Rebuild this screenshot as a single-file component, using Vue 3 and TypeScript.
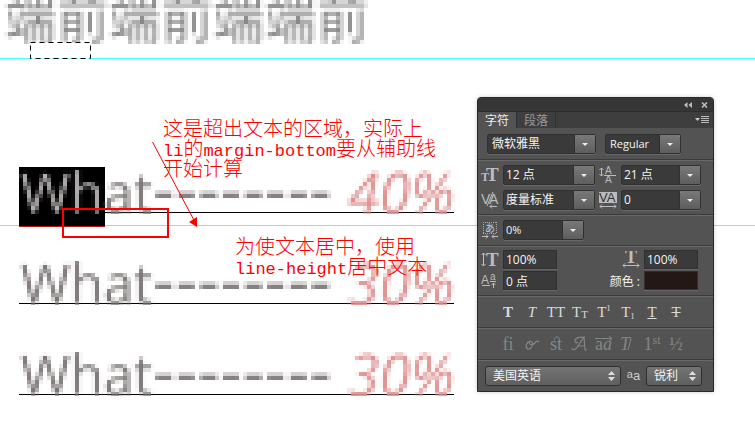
<script setup lang="ts">
import { ref } from 'vue'

interface Item { value: string; selected: boolean }

const items: Item[] = [
  { value: '40%', selected: true },
  { value: '30%', selected: false },
  { value: '30%', selected: false },
]

const family = ref('微软雅黑')
const weight = ref('Regular')
const size = ref('12 点')
const leading = ref('21 点')
const kerning = ref('度量标准')
const tracking = ref('0')
const tsume = ref('0%')
const scaleY = ref('100%')
const scaleX = ref('100%')
const baseline = ref('0 点')
const language = ref('美国英语')
const antialias = ref('锐利')
</script>

<template>
  <main class="canvas">
    <svg class="defs" aria-hidden="true">
      <filter id="mosaic" filterUnits="userSpaceOnUse" x="-8" y="-32" width="640" height="128" color-interpolation-filters="sRGB">
        <feGaussianBlur in="SourceGraphic" stdDeviation="0.8" result="soft" />
        <feFlood x="1" y="1" width="1" height="1" flood-color="#000" />
        <feOffset x="0" y="0" width="4" height="4" dx="0" dy="0" />
        <feTile result="dots" />
        <feComposite in="soft" in2="dots" operator="in" result="p" />
        <feOffset in="p" dx="1" dy="0" result="p1" />
        <feMerge result="q"><feMergeNode in="p" /><feMergeNode in="p1" /></feMerge>
        <feOffset in="q" dx="0" dy="1" result="q1" />
        <feMerge result="r"><feMergeNode in="q" /><feMergeNode in="q1" /></feMerge>
        <feOffset in="r" dx="2" dy="0" result="r1" />
        <feMerge result="s"><feMergeNode in="r" /><feMergeNode in="r1" /></feMerge>
        <feOffset in="s" dx="0" dy="2" result="s1" />
        <feMerge result="t"><feMergeNode in="s" /><feMergeNode in="s1" /></feMerge>
        <feOffset in="t" dx="-1" dy="-1" />
      </filter>
    </svg>

    <h1 class="heading">端前端前端端前</h1>
    <ul class="list">
      <li v-for="(item, i) in items" :key="i" :class="{ selected: item.selected }">
        <span class="line">
          <span class="word"><span class="head">Wh</span>at</span>
          <span class="dashes">--------</span>
          <em>{{ item.value }}</em>
        </span>
      </li>
    </ul>

    <div class="guide upper"></div>
    <div class="guide lower"></div>
    <svg class="marquee" viewBox="0 0 61 17" aria-hidden="true">
      <rect x="0.5" y="0.5" width="60" height="16" fill="#fff" stroke="#000" stroke-dasharray="5 4" />
    </svg>
    <div class="redbox"></div>
    <svg class="arrow" viewBox="0 0 50 90" aria-hidden="true">
      <path d="M2.500 2 46 84" fill="none" stroke="red" />
      <path d="M39 82 47 77V87z" fill="red" />
    </svg>
    <p class="note first">这是超出文本的区域，实际上<br><span>li</span>的<span>margin-bottom</span>要从辅助线<br>开始计算</p>
    <p class="note second">为使文本居中，使用<br><span>line-height</span>居中文本</p>

    <section class="panel" aria-label="字符">
      <header class="titlebar">
        <button aria-label="折叠"><svg width="8" height="6" viewBox="0 0 8 6"><path d="M3.500 0v6L0 3zM8 0v6L4.500 3z" fill="#bbb" /></svg></button>
        <button aria-label="关闭"><svg width="7" height="6" viewBox="0 0 7 6"><path d="M1 0.500 6 5.500M6 0.500 1 5.500" stroke="#bbb" stroke-width="1.600" /></svg></button>
      </header>
      <nav class="tabs">
        <button class="tab active">字符</button>
        <button class="tab">段落</button>
        <button class="menu" aria-label="面板菜单">
          <svg width="14" height="8" viewBox="0 0 14 8"><path d="M0 2h5L2.500 5z" fill="#ccc" /><path d="M6 .5h8M6 2.500h8M6 4.500h8M6 6.500h8" stroke="#bbb" /></svg>
        </button>
      </nav>

      <div class="group fonts">
        <span class="combo wide"><select v-model="family" aria-label="字体"><option>微软雅黑</option></select></span>
        <span class="combo style"><select v-model="weight" aria-label="字形"><option>Regular</option></select></span>
      </div>

      <div class="group pairs">
        <label for="size"><svg width="18" height="18" viewBox="0 0 18 18"><text x="0" y="15" class="g b" font-size="12">T</text><text x="5" y="15" class="g b" font-size="19">T</text></svg></label>
        <span class="combo"><select id="size" v-model="size"><option>12 点</option></select></span>
        <label for="leading"><svg width="18" height="18" viewBox="0 0 18 18"><text x="6" y="8" class="g s" font-size="10">A</text><text x="6" y="17" class="g s" font-size="10">A</text><path d="M5 9.500h12M2.500 2v8M.5 4l2-2 2 2M.5 8l2 2 2-2" class="k" /></svg></label>
        <span class="combo"><select id="leading" v-model="leading"><option>21 点</option></select></span>
        <label for="kern"><svg width="18" height="18" viewBox="0 0 18 18"><text x="0" y="13" class="g s" font-size="14">V</text><text x="8" y="13" class="g s" font-size="14">A</text><path d="M12 1 6 15M9 15.500h7M11 13.500l-2 2 2 2" class="k" /></svg></label>
        <span class="combo"><select id="kern" v-model="kerning"><option>度量标准</option></select></span>
        <label for="track"><svg width="18" height="18" viewBox="0 0 18 18"><path d="M0 1h18v11H0z" fill="#bbb" /><text x="0" y="11" class="s" font-size="13" fill="#333">VA</text><path d="M1 15.500h16M3 13.500l-2 2 2 2M15 13.500l2 2-2 2" class="k" /></svg></label>
        <span class="combo"><select id="track" v-model="tracking"><option>0</option></select></span>
      </div>

      <div class="group single">
        <label for="tsume"><svg width="18" height="18" viewBox="0 0 18 18"><path d="M2.500 1v11M15.500 1v11" stroke="#aaa" stroke-dasharray="1 1" /><path d="M2 1.500h14M2 12.500h14" stroke="#aaa" stroke-dasharray="1 1" /><text x="4" y="11" font-size="10" class="cjk">あ</text><path d="M1 15.500h6M5 13.500l2 2-2 2M17 15.500h-6M13 13.500l-2 2 2 2" class="k" /></svg></label>
        <span class="combo"><select id="tsume" v-model="tsume"><option>0%</option></select></span>
      </div>

      <div class="group scales">
        <label for="sy"><svg width="18" height="18" viewBox="0 0 18 18"><text x="5" y="15" class="g b" font-size="19">T</text><path d="M2.500 2v13M.5 4l2-2 2 2M.5 13l2 2 2-2" class="k" /></svg></label>
        <input id="sy" v-model="scaleY">
        <label for="sx" class="end"><svg width="18" height="18" viewBox="0 0 18 18"><text x="3" y="12" class="g b" font-size="18">T</text><path d="M1 14.500h16M3 12.500l-2 2 2 2M15 12.500l2 2-2 2" class="k" /></svg></label>
        <input id="sx" v-model="scaleX">
        <label for="shift"><svg width="18" height="18" viewBox="0 0 18 18"><text x="0" y="12" class="g s" font-size="12">A</text><text x="9" y="8" class="g s" font-size="10">a</text><path d="M1 13.500h8M9 9.500h6M12.500 16v-5M10.500 13l2-2 2 2" class="k" /></svg></label>
        <input id="shift" v-model="baseline">
        <label for="color" class="end">颜色 :</label>
        <button id="color" class="swatch"></button>
      </div>

      <div class="group glyphs">
        <button><b>T</b></button>
        <button><i>T</i></button>
        <button>TT</button>
        <button>T<small>T</small></button>
        <button>T<sup>1</sup></button>
        <button>T<sub>1</sub></button>
        <button><u>T</u></button>
        <button><s>T</s></button>
      </div>

      <div class="group glyphs off">
        <button>fi</button>
        <button aria-label="花饰"><svg width="16" height="16" viewBox="0 0 16 16"><path d="M6 6C3 5 1 10 3 12.500c2 2 6-1 5.500-5C8 4 4.500 5 5.500 7.500 7 10 11 8 12 5.500c1-1 1.500 1 3-.5" fill="none" stroke="#858585" stroke-width="1.200" /></svg></button>
        <button class="lig">st<svg class="loop" width="6" height="4" viewBox="0 0 6 4"><path d="M.5 4C.5 0 5 0 5.500 3" fill="none" stroke="#858585" /></svg></button>
        <button aria-label="A"><svg width="18" height="16" viewBox="0 0 18 16"><path d="M1 12c0 3 4 2 6-2l6-9 1 13h2M6 10h8M13 2c-4-2-9 0-9 3 0 2 2 2 3 1" fill="none" stroke="#858585" stroke-width="1.200" /></svg></button>
        <button><svg width="20" height="18" viewBox="0 0 20 18"><text x="1" y="15" class="dim" font-size="18">a</text><text x="9" y="15" class="dim slant" font-size="18">a</text><path d="M1 3.500h17M15 1l3 2.500L15 6" fill="none" stroke="#858585" /></svg></button>
        <button><svg width="18" height="18" viewBox="0 0 18 18"><text x="1" y="15" class="dim slant" font-size="18">T</text><path d="M9 15 12 4" stroke="#858585" fill="none" /></svg></button>
        <button>1<sup>st</sup></button>
        <button>½</button>
      </div>

      <footer class="group bottom">
        <span class="popup lang"><select v-model="language" aria-label="语言"><option>美国英语</option></select><svg width="7" height="10" viewBox="0 0 7 10"><path d="M0 4 3.500 0 7 4zM0 6h7L3.500 10z" fill="#ddd" /></svg></span>
        <label for="aa"><span class="up">a</span>a</label>
        <span class="popup"><select id="aa" v-model="antialias"><option>锐利</option></select><svg width="7" height="10" viewBox="0 0 7 10"><path d="M0 4 3.500 0 7 4zM0 6h7L3.500 10z" fill="#ddd" /></svg></span>
      </footer>
    </section>
  </main>
</template>

<style>
body { margin: 0; background: #fff; }
</style>

<style scoped>
* { box-sizing: border-box; }
.canvas { position: relative; min-height: 100vh; overflow: hidden; font-family: "Open Sans", "Noto Sans CJK SC", sans-serif; }
.defs { position: absolute; width: 0; height: 0; }
.heading { margin: 0; padding-left: 4px; height: 50px; font: 400 52px/32px "Noto Sans CJK SC", sans-serif; color: #858585; filter: url(#mosaic); }
.list { position: relative; z-index: 1; list-style: none; margin: 0; padding: 120px 0 38px 19px; display: flex; flex-direction: column; gap: 48px; width: min(100%, 454px); }
li { position: relative; border-bottom: 1px solid #000; }
li.selected::before { content: ""; position: absolute; left: 0; top: -3px; width: 86px; height: 59px; background: #000; border-bottom: 1px solid #b01818; }
.line { position: relative; display: flex; font-size: 54px; line-height: 42px; color: #7c7676; white-space: nowrap; filter: url(#mosaic); padding-left: 1px; }
.selected .head { color: #b4b0b0; }
.dashes { font-family: "DejaVu Sans", sans-serif; font-size: 62px; }
em { margin-left: auto; font-size: 56px; color: #de9090; }

.guide { position: absolute; left: 0; right: 0; height: 1px; background: #48ffff; }
.upper { top: 58px; }
.lower { top: 225px; }
.marquee { position: absolute; left: 30px; top: 42px; width: 61px; height: 17px; }
.redbox { position: absolute; z-index: 2; left: 62px; top: 208px; width: 107px; height: 30px; border: 2px solid red; }
.arrow { position: absolute; z-index: 2; left: 150px; top: 140px; width: 50px; height: 90px; }
.note { position: absolute; z-index: 2; margin: 0; color: red; font: 300 20px/20px "Noto Sans CJK SC", sans-serif; white-space: nowrap; }
.note span { font-family: "Liberation Mono", monospace; font-size: 17px; line-height: 1px; }
.first { left: 163px; top: 118px; }
.second { left: 235px; top: 236px; }

.panel { position: absolute; z-index: 3; left: 477px; top: 97px; width: 237px; border: 1px solid #292929; border-radius: 4px 4px 0 0; background: #535353; box-shadow: 0 0 4px #0003; color: #f4f4f4; font-size: 11px; overflow: hidden; }
button { padding: 0; border: 0; background: none; color: inherit; font: inherit; }
button, label { display: flex; align-items: center; justify-content: center; }
svg { display: block; flex: none; }
select, input { width: 100%; margin: 0; border: 0; border-radius: 0; appearance: none; background: none; color: inherit; font: 11px/18px "Open Sans", "Noto Sans CJK SC", sans-serif; }
.titlebar { display: flex; justify-content: flex-end; align-items: center; gap: 9px; height: 13px; padding-right: 5px; background: #363636; }
.tabs { display: flex; height: 17px; background: #3e3e3e; border-top: 1px solid #2c2c2c; font-size: 12px; }
.tab { width: 39px; color: #999; border-right: 1px solid #2f2f2f; }
.active { background: #535353; color: #eee; }
.menu { margin-left: auto; padding-right: 4px; }
.group { display: flex; align-items: center; padding: 5px 4px; border-top: 1px solid #3b3b3b; box-shadow: inset 0 1px #696969; }
.combo { display: flex; position: relative; height: 20px; border: 1px solid #303030; border-radius: 2px; background: #3a3a3a; box-shadow: 0 1px #686868; }
.combo::before { content: ""; position: absolute; right: 0; top: 0; bottom: 0; width: 20px; border-left: 1px solid #303030; background: linear-gradient(#797979, #5e5e5e); pointer-events: none; }
.combo::after { content: ""; position: absolute; right: 7px; top: 8px; border: 3px solid transparent; border-top-color: #eee; border-bottom: 0; pointer-events: none; }
.combo select { padding: 0 22px 0 2px; }
.fonts { gap: 9px; padding: 6px 9px 5px; border: 0; box-shadow: none; }
.wide { width: 109px; }
.style { width: 76px; }
.fonts .combo select { padding-left: 4px; }
.wide select, .popup select, .pairs select, .scales input { font-size: 12px; }
.pairs { display: grid; grid-template-columns: 18px 92px 18px 80px; gap: 5px 4px; padding: 5px 3px 4px; }
.pairs label:nth-of-type(odd) { justify-content: flex-start; }
.single { gap: 4px; padding-left: 3px; }
.single .combo { width: 81px; }
.scales { display: grid; grid-template-columns: 18px 54px 1fr 54px; gap: 2px 4px; padding: 4px 15px 5px 3px; }
.scales .end { justify-content: flex-end; font-size: 12px; }
input { height: 19px; padding: 0 2px; border: 1px solid #303030; background: #3a3a3a; box-shadow: 0 1px #686868; }
.swatch { height: 19px; background: #231815; border: 1px solid #303030; box-shadow: 0 1px #686868; }
.glyphs { display: grid; grid-template-columns: repeat(8, 24px); padding: 5px 18px 4px; }
.glyphs button { height: 22px; font: 15px/20px "Liberation Serif", serif; color: #dadada; }
.glyphs small { font-size: 11px; padding-top: 3px; }
.glyphs sup { font-size: 9px; line-height: 9px; margin-bottom: 8px; }
.glyphs sub { font-size: 9px; line-height: 9px; margin-top: 9px; }
.off button { color: #858585; font-size: 18px; }
.off sup { font-size: 12px; }
.lig { position: relative; }
.loop { position: absolute; left: 10px; top: 3px; }
.bottom { gap: 6px; padding: 6px 7px 5px; }
.popup { display: flex; align-items: center; height: 20px; width: 56px; padding-right: 5px; border: 1px solid #2f2f2f; border-radius: 3px; background: linear-gradient(#747474, #5f5f5f); }
.popup select { padding: 0 0 0 7px; min-width: 0; }
.lang { width: 136px; }
.bottom label { width: 13px; font: 13px/16px "Liberation Sans", sans-serif; color: #ccc; }
.up { padding-bottom: 4px; font-size: 11px; }
.g { font-family: "Liberation Serif", serif; fill: #bdbdbd; }
.s { font-family: "Liberation Sans", sans-serif; }
.b { font-weight: 700; }
.k { fill: none; stroke: #bdbdbd; }
.cjk { font-family: "Noto Sans CJK JP", sans-serif; fill: #ccc; }
.dim { font-family: "Liberation Serif", serif; fill: #858585; }
.slant { font-style: italic; }
</style>
